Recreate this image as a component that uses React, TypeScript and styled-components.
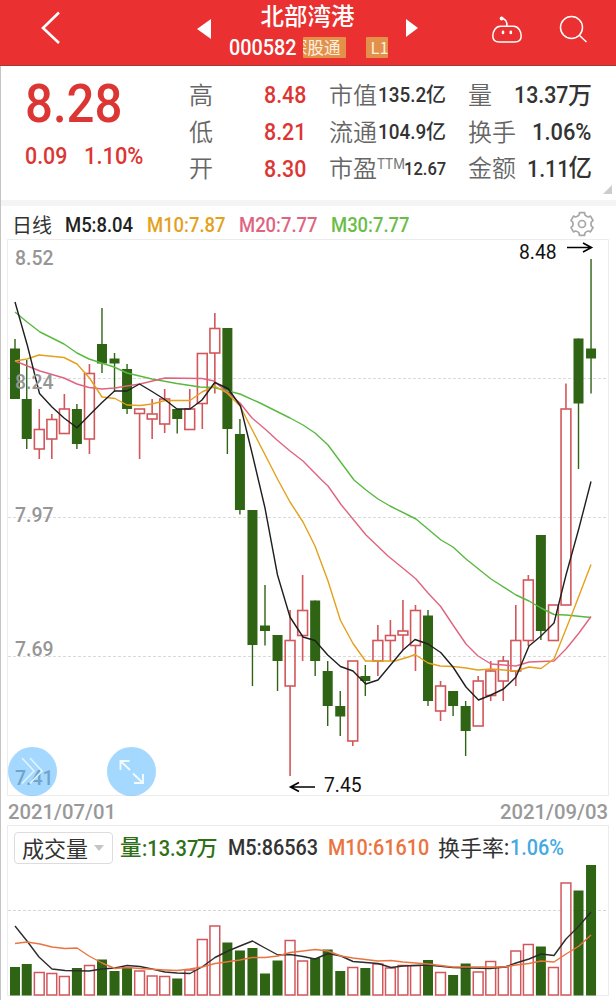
import React from "react";
import styled, { createGlobalStyle } from "styled-components";

const RED = "#ea3030";
const VALUE_RED = "#dc3634";
const UP = "#d2575b";
const DOWN = "#2e6414";
const INK = "#333333";

const Global = createGlobalStyle`
  body { margin: 0; background: #fff; }
  *, *::before, *::after { box-sizing: border-box; }
`;

const Screen = styled.div`
  width: 616px;
  height: 1000px;
  overflow: hidden;
  display: flex;
  flex-direction: column;
  background: #fff;
  box-shadow: inset 1px 0 0 #c4c4c4;
  font-family: Roboto, "Noto Sans CJK SC", sans-serif;
  color: ${INK};
`;

const Num = styled.span<{ $size: number; $w: number; $k?: number; $color?: string; $weight?: number }>`
  display: block;
  flex: none;
  width: ${(p) => p.$w}px;
  font-size: ${(p) => p.$size}px;
  font-weight: ${(p) => p.$weight ?? 500};
  line-height: 1;
  white-space: nowrap;
  color: ${(p) => p.$color ?? "inherit"};
  transform: scaleX(${(p) => p.$k ?? 0.89});
  transform-origin: 0 50%;
`;

const Han = styled.span<{ $size: number; $weight?: number; $color?: string }>`
  display: block;
  flex: none;
  font-family: "Noto Sans CJK SC", sans-serif;
  font-size: ${(p) => p.$size}px;
  font-weight: ${(p) => p.$weight ?? 400};
  line-height: 1;
  white-space: nowrap;
  color: ${(p) => p.$color ?? "inherit"};
`;

const Header = styled.header`
  flex: none;
  height: 66px;
  background: ${RED};
  border-bottom: 1px solid #a63a38;
  color: #fff;
  display: grid;
  grid-template-columns: 190px 235px 1fr;
`;

const Left = styled.div`
  padding: 11px 0 0 40px;
`;

const Center = styled.div`
  display: flex;
  justify-content: space-between;
  padding: 0 7px;
`;

const Arrow = styled.svg`
  margin-top: 19px;
  flex: none;
`;

const TitleBlock = styled.div`
  width: 160px;
  display: flex;
  flex-direction: column;
  align-items: flex-start;
`;

const Title = styled.h1`
  margin: 0 0 0 32px;
  font: 500 23.5px/31px "Noto Sans CJK SC", sans-serif;
`;

const CodeRow = styled.div`
  display: flex;
  align-items: center;
  margin-top: 6px;
  height: 21px;
`;

const Tag = styled.span<{ $w: number; $gap: number; $end?: boolean }>`
  display: flex;
  justify-content: ${(p) => (p.$end ? "flex-end" : "flex-start")};
  align-items: center;
  width: ${(p) => p.$w}px;
  height: 21px;
  margin-left: ${(p) => p.$gap}px;
  padding: 0 5px;
  overflow: ${(p) => (p.$end ? "hidden" : "visible")};
  background: #e3914a;
  border-radius: 1px;
  color: #fdf0e0;
  font-family: "Noto Sans CJK SC", sans-serif;
  font-size: 16.5px;
  line-height: 1;
  white-space: nowrap;
`;

const Tools = styled.div`
  display: flex;
  gap: 36px;
  padding: 14px 0 0 66px;
`;

const Quote = styled.section`
  flex: none;
  height: 134px;
  display: grid;
  grid-template-columns: 190px 140px 139px 1fr;
  position: relative;
`;

const PriceBox = styled.div`
  padding: 11px 0 0 25px;
`;

const Change = styled.div`
  display: flex;
  gap: 17px;
  margin-top: 13px;
`;

const Stats = styled.div<{ $right?: boolean }>`
  display: grid;
  grid-template-rows: repeat(3, 36.7px);
  padding: 11px ${(p) => (p.$right ? 24 : 0)}px 0 0;
`;

const Stat = styled.div<{ $spread?: boolean }>`
  display: flex;
  align-items: center;
  justify-content: ${(p) => (p.$spread ? "space-between" : "flex-start")};
`;

const Label = styled(Han)`
  margin: -3px 0 0 -1px;
`;

const Value = styled.div<{ $ml?: number }>`
  display: flex;
  align-items: center;
  margin-left: ${(p) => p.$ml ?? 0}px;
  ${Han} { margin-top: -3px; }
`;

const Ttm = styled.sup`
  font: 400 14px/1 Roboto, sans-serif;
  color: #777;
  width: 27px;
  align-self: flex-start;
  margin-top: 7px;
  transform: scaleX(0.96);
  transform-origin: 0 50%;
`;

const Corner = styled.svg`
  position: absolute;
  right: 4px;
  bottom: 6px;
`;

const Divider = styled.div`
  flex: none;
  height: 6px;
  margin-left: 1px;
  background: #f4f4f4;
`;

const Legend = styled.div`
  flex: none;
  height: 33px;
  padding: 5px 0 0 12px;
  display: flex;
  align-items: center;
  & > svg { margin: -3px 0 0 159px; }
`;

const LegendItem = styled.div<{ $w: number }>`
  width: ${(p) => p.$w}px;
`;

const PriceChart = styled.div`
  flex: none;
  height: 557px;
  position: relative;
  svg { display: block; }
`;

const RoundButton = styled.button<{ $x: number }>`
  position: absolute;
  left: ${(p) => p.$x}px;
  top: 508px;
  width: 49px;
  height: 49px;
  padding: 0;
  border: 0;
  border-radius: 50%;
  background: rgba(73, 178, 253, 0.5);
`;

const Dates = styled.div`
  flex: none;
  height: 29px;
  display: flex;
  justify-content: space-between;
  align-items: center;
  padding: 3px 8px 0;
  color: #999;
`;

const VolumePanel = styled.section`
  flex: none;
  height: 175px;
  display: flex;
  flex-direction: column;
  svg { display: block; }
`;

const VolumeLegend = styled.div`
  height: 38px;
  margin: 0 7px;
  border: 1px solid #ececec;
  border-bottom: 0;
  padding: 6px 0 0 6px;
  display: flex;
`;

const Picker = styled.div`
  width: 99px;
  height: 32px;
  border: 1.5px solid #dcdcdc;
  border-radius: 4px;
  display: flex;
  align-items: center;
  gap: 6px;
  padding-left: 7px;
  ${Han} { margin-top: -2px; }
`;

const VolumeItem = styled.div<{ $w: number; $ml?: number }>`
  display: flex;
  align-items: center;
  height: 32px;
  width: ${(p) => p.$w}px;
  margin-left: ${(p) => p.$ml ?? 0}px;
  ${Han} { margin-top: -4px; }
`;

type Candle = [up: 0 | 1, high: number, top: number, bottom: number, low: number, volume: number];

const candles: Candle[] = [
  [0, 339, 348.5, 399, 399, 967], [0, 360, 399, 439, 449, 964], [1, 409, 429.5, 449, 459, 972.5],
  [1, 414, 419.5, 439, 459, 973.5], [1, 394, 409, 433.5, 433.5, 976.5], [0, 404, 409, 444, 449, 968],
  [1, 364, 373.5, 439, 454, 965.5], [0, 308, 344, 363.5, 373, 959.5], [0, 353, 358.5, 363.5, 392, 971],
  [0, 364, 369, 409, 414, 967], [1, 409, 409, 413.5, 459, 971], [1, 399, 414, 419, 439, 976],
  [1, 389, 399, 424, 433, 976.5], [0, 409, 409, 419, 433.5, 978.5], [1, 389, 409, 429.5, 429.5, 970],
  [1, 353.5, 353.5, 403.5, 429, 939.5], [1, 313, 328.5, 353, 393.5, 926], [0, 328, 328, 429, 454, 942.5],
  [0, 419, 434, 510, 514.5, 950.5], [0, 510, 510, 645, 686, 948], [0, 585, 625.5, 631, 645.5, 973.5],
  [0, 635, 635, 661, 691, 960.5], [1, 610, 640.5, 686, 776, 940.5], [1, 575, 610.5, 635.5, 661, 961],
  [0, 600.5, 600.5, 661, 676, 958], [0, 661, 671, 706, 726, 949.5], [0, 691, 706, 716.5, 736, 971],
  [1, 661, 661, 741, 746, 967.5], [0, 665, 676, 681, 696, 968], [1, 625, 640.5, 661, 676, 964],
  [1, 620, 635.5, 640.5, 661, 968], [1, 600, 631, 635, 650, 965.5], [1, 605, 610.5, 645.5, 671, 965.5],
  [0, 610, 615.5, 701, 706, 960], [1, 681, 686, 711, 721, 972.5], [0, 691, 691, 706, 716, 975],
  [0, 701, 706, 731, 756, 963.5], [1, 676, 681, 726, 726, 972], [1, 661, 671, 695.5, 701, 961.5],
  [1, 656, 661, 681, 701, 967], [1, 605, 640.5, 671, 686, 951], [1, 575, 580, 640.5, 646, 944.5],
  [0, 535, 535, 631, 640, 946.5], [1, 605, 605, 640.5, 640.5, 967.5], [1, 383.5, 409, 605, 605, 883],
  [0, 338.5, 338.5, 403.5, 469, 890.5], [0, 259, 348.5, 358.5, 393.5, 865],
];

const priceLines = [
  { color: "#58b93f", points: "15,312 27,322 40,332 64,344 77,353 89,359 114,367 127,373 152,379 177,383.5 200,387 214,387.5 228,391 240,394 260,403 290,418 303,425 315,433 328,445 354,480 366,490 378,499 390,506 410,516 416,519 441,540 453,547 466,559 491,579 516,595 529,601 541,608 554,614.5 566,615 591,617.5" },
  { color: "#e0647f", points: "15,361 40,371 64,378 77,384 89,387.5 102,389 115,388 127,386 140,384 165,378 202,378.5 214,381 227,392 240,403 252,418 265,429 277,440 290,451 303,461 321.7,480 328,486 341,504.5 366,535 388,556 410,574 416,579 428,593 440.7,606.5 453,625 466,644 478,656 491,664 516,666 529,662 554,661 566,649 579,633 591,616.5" },
  { color: "#e3a11c", points: "15,361 27,359 39,355 64,357.5 77,364 89.5,378 102,397 115,398.5 127,405 140,405.5 152,404 165,400.5 190,400.5 202,392 214.6,386 227,393 240,406 278,480 290,502 303,522 315,546 328,581 340.5,620.5 353,643.5 365.5,661 395,661 410,656.5 415,654.5 428,663 440,666 453,666.5 466,668 478,670 491,669 516,671 529,667 541,668.5 554,659 572,614 591,564.5" },
  { color: "#1f1f1f", points: "15,302 27.5,346 39.5,393.5 52,407 64,418 77,427.7 89.5,415 102,402.6 114.5,391 127,391 139.5,384 152,391.5 164,399 177,409 190,409 202,400 214.7,382.5 228,388.5 240.5,406 252.5,455 265,508 277.5,575 290,617 303,637 315,640.5 327.7,655 340.5,666.5 353,671 365.7,684 378,680 390.5,665 403,650 415,639.5 428,644 440.7,652.5 453,667 466,687 478.5,700 491,695 503.5,689 516,677 529,646 541,636 554,623 566,575 579,528 591,481.5" },
];

const volumeLines = [
  { color: "#2c2c2c", points: "15,926 27,941 39,957 52,969 65,970.5 89,971 102,969 115,968 127,965.5 140,966.5 152,969 165,972 177,973 190,973.5 202,967 215,957.5 228,951 240,946 252.5,941 265,948 278,955 290,954.5 303,956.5 315,959 328,953.5 341,956 353,961.5 378,963.5 391,967.5 403,966 428,965 453,967.5 490,968.5 505,967 516,963 529,959 541,954 554,955.5 566,939 579,926 591,912" },
  { color: "#ea7440", points: "15,943.5 27,942 40,944 52,947 65,948.5 77,948 89,956 102,963 115,968.5 127,967.5 140,968.5 165,970 177,970.5 190,969 202,967 215,963.5 240,960 252,957.5 265,957.5 278,956 290,952.5 303,951 315,949.5 328,951 341,956 353,958 378,961 391,960.5 403,962 428,964 453,967 503,967 516,965 529,963.5 541,961 554,962 566,954 579,946 591,935" },
];

const centerX = (i: number) => Math.max(15, 14.2 + 12.54 * i);

const axis: [string, number][] = [["8.52", 265], ["8.24", 389], ["7.97", 522], ["7.69", 656], ["7.41", 785]];

const Lines = ({ lines }: { lines: { color: string; points: string }[] }) => (
  <>
    {lines.map((l) => (
      <polyline key={l.color} points={l.points} fill="none" stroke={l.color} strokeWidth={1.4} strokeLinejoin="round" />
    ))}
  </>
);

const Candles = () => (
  <svg width="616" height="557" viewBox="0 239 616 557">
    <path d="M7.5 795.5V239.5H608.5V795.5Z" fill="none" stroke="#ececec" />
    <path d="M8 378.5H608M8 517.5H608M8 656.5H608" stroke="#dadada" strokeDasharray="3 2" />
    {candles.map(([up, high, top, bottom, low], i) => {
      const x = centerX(i);
      return up ? (
        <g key={i} stroke={UP} strokeWidth={1.6} fill="none">
          <path d={`M${x} ${high}V${top}M${x} ${bottom}V${low}`} />
          <rect x={x - 4.9} y={top} width={9.8} height={bottom - top} />
        </g>
      ) : (
        <g key={i} fill={DOWN}>
          <rect x={x - 0.7} y={high} width={1.4} height={low - high} />
          <rect x={x - 5} y={top} width={10} height={bottom - top} />
        </g>
      );
    })}
    <Lines lines={priceLines} />
    {axis.map(([label, y]) => (
      <text key={label} x={15} y={y} fontSize="21" fontWeight="500" fill="#969696" textLength="38.5" lengthAdjust="spacingAndGlyphs">
        {label}
      </text>
    ))}
    <g fill="none" stroke="#000" strokeWidth="1.6">
      <path d="M567 247.5H591M583 243L591.5 247.5L583 252" />
      <path d="M315 787H291M299 782.5L290.5 787L299 791.5" />
    </g>
    <text x="519" y="259" fontSize="19.3" fill="#111">8.48</text>
    <text x="324" y="791.5" fontSize="19.3" fill="#111">7.45</text>
  </svg>
);

const Volumes = () => (
  <svg width="616" height="137" viewBox="0 863 616 137">
    <path d="M7.5 863V995.5H608.5V863" fill="none" stroke="#ececec" />
    <path d="M8 910.5H608" stroke="#d6d6d6" strokeDasharray="3 2" />
    {candles.map(([up, , , , , v], i) =>
      up ? (
        <rect key={i} x={centerX(i) - 4.9} y={v} width={9.8} height={995 - v} fill="#fff" stroke={UP} strokeWidth={1.5} />
      ) : (
        <rect key={i} x={centerX(i) - 5} y={v} width={10} height={995.5 - v} fill={DOWN} />
      )
    )}
    <Lines lines={volumeLines} />
  </svg>
);

const gearPath = Array.from({ length: 6 }, (_, i) => {
  const at = (deg: number, r: number) => {
    const a = ((i * 60 + deg - 90) * Math.PI) / 180;
    return `${(13 + r * Math.cos(a)).toFixed(2)} ${(13 + r * Math.sin(a)).toFixed(2)}`;
  };
  return `${i ? "L" : "M"}${at(-13, 11.6)}L${at(13, 11.6)}L${at(17, 9.6)}Q${at(30, 8.4)} ${at(43, 9.6)}`;
}).join("") + "Z";

export default function App() {
  return (
    <Screen>
      <Global />
      <Header>
        <Left>
          <svg width="22" height="34" viewBox="0 0 22 34" fill="none" stroke="#fff" strokeWidth="2.6">
            <path d="M19 1.5L3 17L19 32" />
          </svg>
        </Left>
        <Center>
          <Arrow width="14" height="20" viewBox="0 0 14 20"><path d="M0 10L14 0V20Z" fill="#fff" /></Arrow>
          <TitleBlock>
            <Title>北部湾港</Title>
            <CodeRow>
              <Num $size={22} $w={68} $k={0.9}>000582</Num>
              <Tag $w={43} $gap={6} $end>深股通</Tag>
              <Tag $w={22} $gap={20}>L1</Tag>
            </CodeRow>
          </TitleBlock>
          <Arrow width="12" height="18" viewBox="0 0 12 18"><path d="M12 9L0 0V18Z" fill="#fff" /></Arrow>
        </Center>
        <Tools>
          <svg width="32" height="32" viewBox="0 0 32 32" fill="none" stroke="#fff" strokeWidth="1.5">
            <path d="M9.5 12.300H22.500C27.500 12.300 30.200 17.500 30.200 22Q30.200 28 23.500 28H8.500Q1.800 28 1.800 22C1.800 17.500 4.500 12.300 9.500 12.300Z" />
            <path d="M16 12.300C16.200 7 14.500 5 11 4.600" />
            <circle cx="10.700" cy="4.500" r="1.300" fill="#fff" />
            <path d="M12 17.800V19M19.800 17.800V19" strokeWidth="2.600" strokeLinecap="round" />
          </svg>
          <svg width="32" height="32" viewBox="0 0 32 32" fill="none" stroke="#fff" strokeWidth="1.5">
            <circle cx="12.500" cy="13.500" r="11" />
            <path d="M20 21L27.500 28" />
          </svg>
        </Tools>
      </Header>

      <Quote>
        <PriceBox>
          <Num $size={54} $w={96} $k={0.91} $color={VALUE_RED}>8.28</Num>
          <Change>
            <Num $size={24} $w={42} $k={0.89} $color={VALUE_RED}>0.09</Num>
            <Num $size={24} $w={60} $k={0.91} $color={VALUE_RED}>1.10%</Num>
          </Change>
        </PriceBox>
        <Stats>
          {[["高", "8.48"], ["低", "8.21"], ["开", "8.30"]].map(([label, value]) => (
            <Stat key={label}>
              <Label $size={24} $weight={350} $color="#666">{label}</Label>
              <Value $ml={51}><Num $size={24} $w={42} $k={0.89} $color={VALUE_RED}>{value}</Num></Value>
            </Stat>
          ))}
        </Stats>
        <Stats>
          {[["市值", "135.2"], ["流通", "104.9"]].map(([label, value]) => (
            <Stat key={label}>
              <Label $size={24} $weight={350} $color="#666">{label}</Label>
              <Value $ml={1}>
                <Num $size={21} $w={48} $k={0.9}>{value}</Num>
                <Han $size={20} $weight={500}>亿</Han>
              </Value>
            </Stat>
          ))}
          <Stat>
            <Label $size={24} $weight={350} $color="#666">市盈</Label>
            <Ttm>TTM</Ttm>
            <Num $size={19} $w={42} $k={0.87}>12.67</Num>
          </Stat>
        </Stats>
        <Stats $right>
          <Stat $spread>
            <Label $size={24} $weight={350} $color="#666">量</Label>
            <Value><Num $size={24} $w={54}>13.37</Num><Han $size={24} $weight={500}>万</Han></Value>
          </Stat>
          <Stat $spread>
            <Label $size={24} $weight={350} $color="#666">换手</Label>
            <Num $size={24} $w={60} $k={0.91}>1.06%</Num>
          </Stat>
          <Stat $spread>
            <Label $size={24} $weight={350} $color="#666">金额</Label>
            <Value><Num $size={24} $w={42}>1.11</Num><Han $size={23.5} $weight={500}>亿</Han></Value>
          </Stat>
        </Stats>
        <Corner width="9" height="9"><path d="M9 0V9H0Z" fill="#ccc" /></Corner>
      </Quote>

      <Divider />

      <Legend>
        <LegendItem $w={53}><Han $size={20}>日线</Han></LegendItem>
        <LegendItem $w={82}><Num $size={20.5} $w={68} $k={0.9} $color="#222">M5:8.04</Num></LegendItem>
        <LegendItem $w={92}><Num $size={20.5} $w={79} $k={0.9} $color="#e3a11c">M10:7.87</Num></LegendItem>
        <LegendItem $w={92}><Num $size={20.5} $w={79} $k={0.9} $color="#e0647f">M20:7.77</Num></LegendItem>
        <LegendItem $w={79}><Num $size={20.5} $w={79} $k={0.9} $color="#6bbd49">M30:7.77</Num></LegendItem>
        <svg width="26" height="26" viewBox="0 0 26 26" fill="none" stroke="#a6a6a6" strokeWidth="1.7" strokeLinejoin="round">
          <path d={gearPath} />
          <circle cx="13" cy="13" r="3.500" />
        </svg>
      </Legend>

      <PriceChart>
        <Candles />
        <RoundButton $x={7.5}>
          <svg width="49" height="49" viewBox="0 0 49 49" fill="none" stroke="#e4f4ff" strokeWidth="1.5">
            <path d="M14 11L26 24L14 36.500M22 11L34 24L22 36.500" />
          </svg>
        </RoundButton>
        <RoundButton $x={107}>
          <svg width="49" height="49" viewBox="0 0 49 49" fill="none" stroke="#f2faff" strokeWidth="1.9">
            <path d="M13.500 23V14H22.500M13.500 14L23 23M27 36H36V27M36 36L26 26.500" />
          </svg>
        </RoundButton>
      </PriceChart>

      <Dates>
        <Num $size={21} $w={108} $k={0.965}>2021/07/01</Num>
        <Num $size={21} $w={108} $k={0.965}>2021/09/03</Num>
      </Dates>

      <VolumePanel>
        <VolumeLegend>
          <Picker>
            <Han $size={22}>成交量</Han>
            <svg width="10" height="6"><path d="M0 0H10L5 6Z" fill="#c4c4c4" /></svg>
          </Picker>
          <VolumeItem $w={108} $ml={7}>
            <Han $size={21.5} $color="#2f6f16" $weight={500}>量</Han>
            <Num $size={22.5} $w={55} $color="#2f6f16" $k={0.89}>:13.37</Num>
            <Han $size={21} $color="#2f6f16" $weight={500}>万</Han>
          </VolumeItem>
          <VolumeItem $w={100}><Num $size={22} $w={91} $k={0.9}>M5:86563</Num></VolumeItem>
          <VolumeItem $w={110}><Num $size={22} $w={102} $k={0.9} $color="#ea7440">M10:61610</Num></VolumeItem>
          <VolumeItem $w={140}>
            <Han $size={22}>换手率</Han>
            <Num $size={22} $w={6} $k={0.89}>:</Num>
            <Num $size={22} $w={55} $k={0.9} $color="#45a9e3">1.06%</Num>
          </VolumeItem>
        </VolumeLegend>
        <Volumes />
      </VolumePanel>
    </Screen>
  );
}
